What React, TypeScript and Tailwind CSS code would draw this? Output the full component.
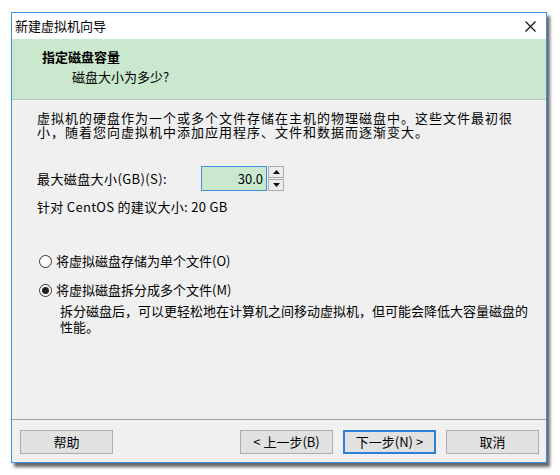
import React from "react";

const font = { fontFamily: '"Noto Sans CJK SC", "Noto Sans", sans-serif' };

function Btn({ children, primary }: { children: React.ReactNode; primary?: boolean }) {
  return (
    <div
      className={
        "w-[93px] h-[24px] flex items-center justify-center bg-[#e1e1e1] text-[13px] text-black " +
        (primary ? "border-2 border-[#2f7fd6]" : "border border-[#adadad]")
      }
    >
      {children}
    </div>
  );
}

function Radio({ checked }: { checked?: boolean }) {
  return (
    <div className="w-[13px] h-[13px] rounded-full border border-[#333] bg-white flex items-center justify-center shrink-0">
      {checked && <div className="w-[7px] h-[7px] rounded-full bg-[#222]" />}
    </div>
  );
}

export default function App() {
  return (
    <div className="w-[560px] h-[475px] bg-white pt-[12px] pl-[11px]" style={font}>
      <div className="w-[536px] h-[451px] border border-[#3c8ee0] bg-[#f0f0f0] flex flex-col shadow-[3px_4px_3px_rgba(0,0,0,0.6)]">
        <div className="h-[26px] bg-white flex items-center justify-between pl-[3px] pr-[10px] text-[13px] text-black">
          <span>新建虚拟机向导</span>
          <svg width="11" height="11" viewBox="0 0 11 11">
            <path d="M0.5 0.5 L10.5 10.5 M10.5 0.5 L0.5 10.5" stroke="#111" strokeWidth="1.2" />
          </svg>
        </div>
        <div className="h-[61px] bg-[#c9e8cd] border-b border-[#b8c8bb] pl-[30px] pt-[9px] text-black">
          <div className="text-[13px] font-bold leading-[18px]">指定磁盘容量</div>
          <div className="text-[13px] leading-[18px] pl-[30px] mt-[2px]">磁盘大小为多少?</div>
        </div>
        <div className="h-[319px] pl-[25px] text-[13px] text-black">
          <p className="mt-[11px] leading-[14px] tracking-[1px]">
            虚拟机的硬盘作为一个或多个文件存储在主机的物理磁盘中。这些文件最初很
            <br />
            小，随着您向虚拟机中添加应用程序、文件和数据而逐渐变大。
          </p>
          <div className="mt-[27px] flex items-center h-[25px]">
            <span className="w-[164px] tracking-[0.4px]">最大磁盘大小(GB)(S):</span>
            <div className="w-[66px] h-[25px] border border-[#3c8ee0] bg-[#c9e8cd] flex items-center justify-end pr-[3px]">
              30.0
            </div>
            <div className="ml-[1px] w-[16px] h-[25px] flex flex-col">
              <div className="h-[12px] border border-[#acacac] bg-[#ececec] flex items-center justify-center">
                <svg width="7" height="4" viewBox="0 0 7 4">
                  <path d="M3.5 0 L7 4 L0 4 Z" fill="#111" />
                </svg>
              </div>
              <div className="h-[12px] mt-[1px] border border-[#acacac] bg-[#ececec] flex items-center justify-center">
                <svg width="7" height="4" viewBox="0 0 7 4">
                  <path d="M0 0 L7 0 L3.5 4 Z" fill="#111" />
                </svg>
              </div>
            </div>
          </div>
          <div className="mt-[9px] leading-[14px] tracking-[0.3px]">针对 CentOS 的建议大小: 20 GB</div>
          <div className="mt-[40px] flex items-center gap-[4px] h-[14px] ml-[2px]">
            <Radio />
            <span className="leading-[14px]">将虚拟磁盘存储为单个文件(O)</span>
          </div>
          <div className="mt-[15px] flex items-center gap-[4px] h-[14px] ml-[2px]">
            <Radio checked />
            <span className="leading-[14px]">将虚拟磁盘拆分成多个文件(M)</span>
          </div>
          <p className="mt-[6px] pl-[23px] leading-[16px]">
            拆分磁盘后，可以更轻松地在计算机之间移动虚拟机，但可能会降低大容量磁盘的
            <br />
            性能。
          </p>
        </div>
        <div className="border-t border-[#a0a0a0] flex-1 flex pt-[10px] pl-[8px] pr-[7px]">
          <Btn>帮助</Btn>
          <div className="flex-1" />
          <div className="flex gap-[10px]">
            <Btn>&lt; 上一步(B)</Btn>
            <Btn primary>下一步(N) &gt;</Btn>
            <Btn>取消</Btn>
          </div>
        </div>
      </div>
    </div>
  );
}
